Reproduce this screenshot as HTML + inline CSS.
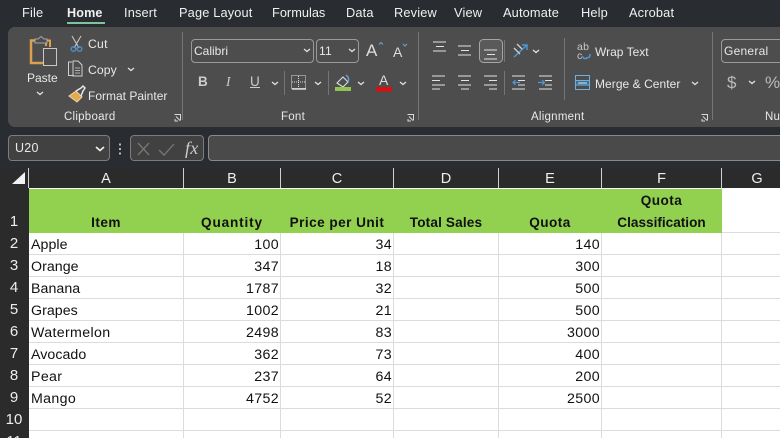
<!DOCTYPE html>
<html><head><meta charset="utf-8">
<style>
html,body{margin:0;padding:0;background:#fff}
#p{position:relative;width:780px;height:438px;overflow:hidden;background:#292c30;font-family:"Liberation Sans",sans-serif}
.t{position:absolute;white-space:nowrap;color:#e8e8e8;font-size:12.5px;line-height:16px;letter-spacing:.25px}
.m{color:#f0f0f0;font-size:12.8px;top:5px;letter-spacing:.15px}
.r{position:absolute;background:#4d4d4d;top:27px;height:100px}
.sep{position:absolute;width:1px;background:#757575}
.box{position:absolute;border:1px solid #9a9a9a;border-radius:4px;box-sizing:border-box;height:24px}
svg{position:absolute;overflow:visible}
.c{position:absolute;white-space:nowrap;color:#111;font-size:14.2px;line-height:22px;letter-spacing:.35px}
.s{letter-spacing:.05px}
.b{font-weight:bold;text-align:center;letter-spacing:.45px;font-size:13.6px}
.n{text-align:right}
.h{position:absolute;color:#eee;font-size:14.5px;line-height:20px;text-align:center;top:169px}
.rh{position:absolute;left:0;width:28px;color:#eee;font-size:15px;line-height:22px;text-align:center}
.g{position:absolute;background:#dcdcdc}
.hs{position:absolute;top:168px;width:1px;height:20px;background:#d0d0d0}
</style></head><body><div id="p">

<!-- Menu -->
<div class="t m" style="left:22px">File</div>
<div class="t m" style="left:67px;font-weight:bold;font-size:12.6px">Home</div>
<div style="position:absolute;left:67px;top:22px;width:38px;height:2px;background:#7fc59a"></div>
<div class="t m" style="left:124px">Insert</div>
<div class="t m" style="left:179px">Page Layout</div>
<div class="t m" style="left:272px;letter-spacing:0">Formulas</div>
<div class="t m" style="left:346px">Data</div>
<div class="t m" style="left:394px">Review</div>
<div class="t m" style="left:454px">View</div>
<div class="t m" style="left:503px">Automate</div>
<div class="t m" style="left:581px">Help</div>
<div class="t m" style="left:629px">Acrobat</div>

<!-- Ribbon -->
<div class="r" style="left:8px;width:772px;border-radius:7px 0 0 7px"></div>
<div class="sep" style="left:182px;top:32px;height:88px"></div>
<div class="sep" style="left:418px;top:32px;height:88px"></div>
<div class="sep" style="left:712px;top:32px;height:88px"></div>
<div class="sep" style="left:564px;top:38px;height:62px"></div>
<div class="sep" style="left:504px;top:40px;height:22px"></div>
<div class="sep" style="left:504px;top:71px;height:24px"></div>
<div class="sep" style="left:284px;top:71px;height:24px"></div>
<div class="sep" style="left:328px;top:71px;height:24px"></div>

<!-- Clipboard -->
<svg style="left:0;top:0" width="780" height="130" fill="none">
<path d="M38 40.5H31V63H43" stroke="#dca04e" stroke-width="2.5"/>
<path d="M46 46V40.5H50V47" stroke="#dca04e" stroke-width="2"/>
<path d="M35 43V39H38L41 36.5L44 39H47V43Z" stroke="#a8a8a8" fill="#4d4d4d"/>
<rect x="43.5" y="48.5" width="13" height="17" stroke="#c8c8c8" fill="#4d4d4d"/>
<path d="M37 92l3 2.5 3-2.5" stroke="#e0e0e0" stroke-width="1.3"/>
<path d="M72 36l7 12M81 36l-7 12" stroke="#c8c8c8" stroke-width="1.1"/>
<circle cx="73.5" cy="49" r="2.3" stroke="#4f8ec7" stroke-width="1.4"/><circle cx="79.5" cy="49" r="2.3" stroke="#4f8ec7" stroke-width="1.4"/>
<path d="M72 62h-3.500v13.500H74M73 65v-4h5l4 4v11h-9z" stroke="#d0d0d0"/>
<path d="M75 68h5M75 70.500h5M75 73h5" stroke="#d0d0d0" stroke-width=".8"/>
<path d="M128 68l3 2.500 3-2.500" stroke="#e0e0e0" stroke-width="1.300"/>
<path d="M69 96l7-5 6 6-5 5z" fill="#e4a84f" stroke="#f0d8a8"/>
<path d="M76 91l5-3 2-2 2 2-2 3-2 5" stroke="#e8e8e8" stroke-width="1.500"/>
<path d="M174.500 114.500h6v6M176 116.500l4 4M175 119v2h3" stroke="#d8d8d8"/>
<path d="M407.500 114.500h6v6M409 116.500l4 4M408 119v2h3" stroke="#d8d8d8"/>
<path d="M701.500 114.500h6v6M703 116.500l4 4M702 119v2h3" stroke="#d8d8d8"/>
</svg>
<div class="t" style="left:27px;top:70px;font-size:12px;letter-spacing:0">Paste</div>
<div class="t" style="left:88px;top:36px;font-size:12.200px">Cut</div>
<div class="t" style="left:88px;top:62px;font-size:12.200px;letter-spacing:.1px">Copy</div>
<div class="t" style="left:88px;top:88px;font-size:12px;letter-spacing:0">Format Painter</div>
<div class="t" style="left:64px;top:109px;font-size:11.500px">Clipboard</div>
<div class="t" style="left:281px;top:109px;font-size:11.500px">Font</div>
<div class="t" style="left:531px;top:109px;font-size:11.500px">Alignment</div>
<div class="t" style="left:765px;top:109px;font-size:11.500px">Nu</div>

<!-- Font -->
<div class="box" style="left:191px;top:39px;width:123px"></div>
<div class="t" style="left:194px;top:43px;font-size:12px;letter-spacing:0">Calibri</div>
<div class="box" style="left:316px;top:39px;width:43px"></div>
<div class="t" style="left:319px;top:43px;font-size:12px">11</div>
<div class="t" style="left:366px;top:41px;font-size:17px;line-height:20px;color:#ddd">A</div>
<div class="t" style="left:393px;top:43px;font-size:14px;line-height:18px;color:#ddd">A</div>
<div class="t" style="left:198px;top:74px;font-weight:bold;font-size:13.500px;color:#ccc">B</div>
<div class="t" style="left:226px;top:74px;font-style:italic;font-size:13.500px;color:#ccc;font-family:'Liberation Serif',serif">I</div>
<div class="t" style="left:250px;top:74px;font-size:13.500px;color:#ccc;text-decoration:underline">U</div>
<div class="t" style="left:379px;top:72px;font-size:14px;color:#ddd">A</div>
<svg style="left:0;top:0" width="780" height="130" fill="none">
<path d="M304 49l3 2.500 3-2.500M349 49l3 2.500 3-2.500M272 82l3 2.500 3-2.500M315 82l3 2.500 3-2.500M358 82l3 2.500 3-2.500M400 82l3 2.500 3-2.500" stroke="#e0e0e0" stroke-width="1.300"/>
<path d="M379 44.500l2-2 2 2" stroke="#5f9fd6" stroke-width="1.200"/>
<path d="M403 44l2 2 2-2" stroke="#5f9fd6" stroke-width="1.200"/>
<rect x="291.500" y="75.500" width="14" height="13" stroke="#ddd" stroke-dasharray="1 1"/>
<path d="M298.500 76v12M292 82h13" stroke="#ddd" stroke-dasharray="1 1"/>
<path d="M292 89h14" stroke="#eee" stroke-width="1.300"/>
<path d="M337 83l6-6 5 5-5 5z" stroke="#ddd" stroke-width="1.100"/>
<path d="M346 75c3 2 3 5 2 7" stroke="#5f9fd6" stroke-width="1.500"/>
<rect x="335" y="87" width="16" height="4" fill="#92c353"/>
<rect x="376" y="87" width="16" height="4.500" rx="1" fill="#d80f10"/>
<path d="M433 42h13M436 46.500h8M433 51h13" stroke="#e2e2e2" stroke-width="1.100"/>
<path d="M458 46h13M461 50.500h8M458 55h13" stroke="#e2e2e2" stroke-width="1.100"/>
<rect x="479.500" y="39.500" width="23" height="23" rx="4" stroke="#a5a5a5" fill="#5a5a5a"/>
<path d="M484 50h13M487 54.500h8M484 59h13" stroke="#e2e2e2" stroke-width="1.100"/>
<path d="M432 76h13M432 80.500h8M432 85h13M432 89h8" stroke="#e2e2e2" stroke-width="1.100"/>
<path d="M458 76h13M461 80.500h8M458 85h13M461 89h8" stroke="#e2e2e2" stroke-width="1.100"/>
<path d="M484 76h13M489 80.500h8M484 85h13M489 89h8" stroke="#e2e2e2" stroke-width="1.100"/>
<path d="M512 76h13M518 80.500h7M518 85h7M512 89h13" stroke="#e2e2e2" stroke-width="1.100"/>
<path d="M520 82.500h-7M515.500 80l-2.500 2.500 2.500 2.500" stroke="#4f9ad8" stroke-width="1.200"/>
<path d="M539 76h13M545 80.500h7M545 85h7M539 89h13" stroke="#e2e2e2" stroke-width="1.100"/>
<path d="M538 82.500h6M542 80l2.500 2.500-2.500 2.500" stroke="#4f9ad8" stroke-width="1.200"/>
<path d="M514 57l12-11M522 45h5v5" stroke="#4f9ad8" stroke-width="1.400"/>
<path d="M514 48l6 6M517 44l5 5" stroke="#d0d0d0" stroke-width="1.300"/>
<path d="M533 50l3 2.500 3-2.500M692 82l3 2.500 3-2.500M749 81l3 2.500 3-2.500" stroke="#e0e0e0" stroke-width="1.300"/>
<path d="M586 58c3 0 4-1 4-4M582 56l2 2.500 3 0" stroke="#4f9ad8" stroke-width="1.400"/>
<rect x="575.500" y="75.500" width="14" height="14" stroke="#6eaee0"/>
<rect x="575.500" y="80.500" width="14" height="4.500" fill="#3d6f96" stroke="#6eaee0"/>
<path d="M578 83h9" stroke="#e8e8e8"/>
</svg>
<div class="t" style="left:577px;top:42px;font-size:10.500px;line-height:10px;color:#c8c8c8">ab</div>
<div class="t" style="left:577px;top:51px;font-size:10.500px;line-height:10px;color:#c8c8c8">c</div>
<div class="t" style="left:595px;top:44px;font-size:12px;letter-spacing:0">Wrap Text</div>
<div class="t" style="left:595px;top:76px;font-size:12px;letter-spacing:.05px">Merge &amp; Center</div>
<div class="box" style="left:721px;top:39px;width:70px"></div>
<div class="t" style="left:724px;top:43px;font-size:12px">General</div>
<div class="t" style="left:727px;top:73px;font-size:17px;line-height:20px;color:#bbb">$</div>
<div class="t" style="left:765px;top:73px;font-size:17px;line-height:20px;color:#bbb">%</div>

<!-- Formula bar -->
<div class="box" style="left:8px;top:135px;width:102px;height:26px;background:#414141;border-color:#7c7c7c"></div>
<div class="t" style="left:15px;top:140px;font-size:12.500px">U20</div>
<svg style="left:0;top:125px" width="780" height="40" fill="none">
<path d="M96 22l4 3.500 4-3.500" stroke="#eee" stroke-width="1.700"/>
<path d="M120 18.500v2M120 23v2M120 27.500v2" stroke="#ddd" stroke-width="1.600"/>
</svg>
<div class="box" style="left:130px;top:135px;width:74px;height:26px;background:#414141;border-color:#7c7c7c"></div>
<svg style="left:0;top:125px" width="780" height="40" fill="none">
<path d="M138 18l11 12M149 18l-11 12" stroke="#777" stroke-width="1.300"/>
<path d="M159 25l5 5 10-11" stroke="#777" stroke-width="1.300"/>
</svg>
<div class="t" style="left:185px;top:139px;font:italic 18px/18px 'Liberation Serif',serif;color:#ccc">fx</div>
<div class="box" style="left:208px;top:135px;width:590px;height:26px;background:#4a4a4a;border-color:#8a8a8a"></div>

<!-- Headers -->
<div style="position:absolute;left:0;top:168px;width:780px;height:20px;background:#2b2b2b"></div>
<div style="position:absolute;left:0;top:188px;width:28px;height:250px;background:#2b2b2b"></div>
<svg style="left:0;top:168px" width="30" height="20"><path d="M12 16L25 4V16Z" fill="#f2f2f2"/></svg>
<div class="hs" style="left:28px"></div><div class="hs" style="left:183px"></div><div class="hs" style="left:280px"></div><div class="hs" style="left:393px"></div><div class="hs" style="left:498px"></div><div class="hs" style="left:601px"></div><div class="hs" style="left:721px"></div>
<div class="h" style="left:29px;width:154px">A</div>
<div class="h" style="left:184px;width:96px">B</div>
<div class="h" style="left:281px;width:112px">C</div>
<div class="h" style="left:394px;width:104px">D</div>
<div class="h" style="left:499px;width:102px">E</div>
<div class="h" style="left:602px;width:119px">F</div>
<div class="h" style="left:722px;width:70px">G</div>
<div class="rh" style="top:211px">1</div>
<div class="rh" style="top:233px">2</div>
<div class="rh" style="top:255px">3</div>
<div class="rh" style="top:277px">4</div>
<div class="rh" style="top:299px">5</div>
<div class="rh" style="top:321px">6</div>
<div class="rh" style="top:343px">7</div>
<div class="rh" style="top:365px">8</div>
<div class="rh" style="top:387px">9</div>
<div class="rh" style="top:409px">10</div>
<div class="rh" style="top:431px">11</div>

<!-- Sheet -->
<div style="position:absolute;left:29px;top:188px;width:751px;height:250px;background:#fff"></div>
<div class="g" style="left:183px;top:233px;width:1px;height:205px"></div>
<div class="g" style="left:280px;top:233px;width:1px;height:205px"></div>
<div class="g" style="left:393px;top:233px;width:1px;height:205px"></div>
<div class="g" style="left:498px;top:233px;width:1px;height:205px"></div>
<div class="g" style="left:601px;top:233px;width:1px;height:205px"></div>
<div class="g" style="left:721px;top:188px;width:1px;height:250px"></div>
<div class="g" style="left:29px;top:232px;width:751px;height:1px"></div>
<div class="g" style="left:29px;top:254px;width:751px;height:1px"></div>
<div class="g" style="left:29px;top:276px;width:751px;height:1px"></div>
<div class="g" style="left:29px;top:298px;width:751px;height:1px"></div>
<div class="g" style="left:29px;top:320px;width:751px;height:1px"></div>
<div class="g" style="left:29px;top:342px;width:751px;height:1px"></div>
<div class="g" style="left:29px;top:364px;width:751px;height:1px"></div>
<div class="g" style="left:29px;top:386px;width:751px;height:1px"></div>
<div class="g" style="left:29px;top:408px;width:751px;height:1px"></div>
<div class="g" style="left:29px;top:430px;width:751px;height:1px"></div>
<div style="position:absolute;left:29px;top:189px;width:693px;height:44px;background:#92d050"></div>

<div class="c b" style="left:29px;top:212px;width:154px">Item</div>
<div class="c b" style="left:184px;top:212px;width:96px;letter-spacing:.85px">Quantity</div>
<div class="c b" style="left:281px;top:212px;width:112px">Price per Unit</div>
<div class="c b" style="left:394px;top:212px;width:104px;letter-spacing:.15px">Total Sales</div>
<div class="c b" style="left:499px;top:212px;width:102px">Quota</div>
<div class="c b" style="left:602px;top:190px;width:119px">Quota</div>
<div class="c b" style="left:602px;top:212px;width:119px;letter-spacing:0">Classification</div>

<div class="c s" style="left:31px;top:234px">Apple</div>
<div class="c s" style="left:31px;top:256px">Orange</div>
<div class="c s" style="left:31px;top:278px">Banana</div>
<div class="c s" style="left:31px;top:300px">Grapes</div>
<div class="c" style="left:31px;top:322px">Watermelon</div>
<div class="c s" style="left:31px;top:344px">Avocado</div>
<div class="c" style="left:31px;top:366px">Pear</div>
<div class="c" style="left:31px;top:388px">Mango</div>

<div class="c n" style="right:501px;top:234px">100</div>
<div class="c n" style="right:501px;top:256px">347</div>
<div class="c n" style="right:501px;top:278px">1787</div>
<div class="c n" style="right:501px;top:300px">1002</div>
<div class="c n" style="right:501px;top:322px">2498</div>
<div class="c n" style="right:501px;top:344px">362</div>
<div class="c n" style="right:501px;top:366px">237</div>
<div class="c n" style="right:501px;top:388px">4752</div>

<div class="c n" style="right:388px;top:234px">34</div>
<div class="c n" style="right:388px;top:256px">18</div>
<div class="c n" style="right:388px;top:278px">32</div>
<div class="c n" style="right:388px;top:300px">21</div>
<div class="c n" style="right:388px;top:322px">83</div>
<div class="c n" style="right:388px;top:344px">73</div>
<div class="c n" style="right:388px;top:366px">64</div>
<div class="c n" style="right:388px;top:388px">52</div>

<div class="c n" style="right:180px;top:234px">140</div>
<div class="c n" style="right:180px;top:256px">300</div>
<div class="c n" style="right:180px;top:278px">500</div>
<div class="c n" style="right:180px;top:300px">500</div>
<div class="c n" style="right:180px;top:322px">3000</div>
<div class="c n" style="right:180px;top:344px">400</div>
<div class="c n" style="right:180px;top:366px">200</div>
<div class="c n" style="right:180px;top:388px">2500</div>
</div></body></html>
